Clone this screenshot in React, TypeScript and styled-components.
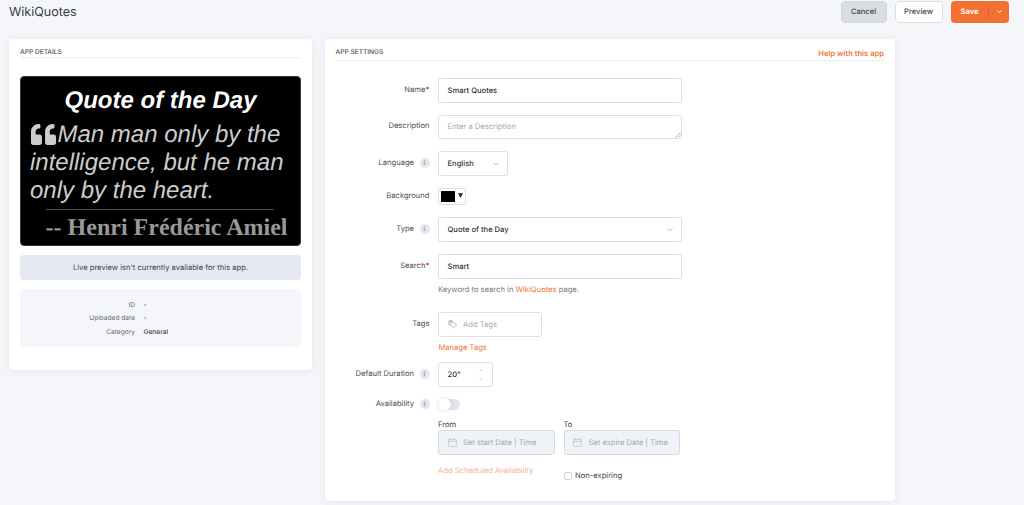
import React from "react";
import styled, { createGlobalStyle } from "styled-components";

const Global = createGlobalStyle`
  *, *::before, *::after { box-sizing: border-box; }
  body {
    margin: 0;
    background: #f5f6fa;
    color: #3e444d;
    font-family: Inter, "Liberation Sans", sans-serif;
    font-size: 7.6px;
    line-height: 10px;
    text-rendering: geometricPrecision;
    overflow: hidden;
  }
`;

const Page = styled.div`
  height: 505px;
  overflow: hidden;
`;

const Header = styled.header`
  display: flex;
  align-items: center;
  height: 23px;
  padding: 0 15px 0 9px;
`;

const Title = styled.h1`
  flex: 1;
  margin: 0;
  padding-top: 2px;
  font-size: 12.5px;
  line-height: 16px;
  font-weight: 400;
  color: #363b44;
`;

const Button = styled.button<{ $kind: "muted" | "plain" }>`
  width: ${(p) => (p.$kind === "muted" ? 46 : 48)}px;
  height: 22px;
  margin-right: ${(p) => (p.$kind === "muted" ? 8 : 8.5)}px;
  padding: 1px 0 0;
  border: 1px solid ${(p) => (p.$kind === "muted" ? "#d5d8de" : "#dcdee3")};
  border-radius: 4px;
  background: ${(p) => (p.$kind === "muted" ? "#d9dce1" : "#fff")};
  color: #3e444d;
  font: 500 7.6px/10px Inter, sans-serif;
  text-rendering: geometricPrecision;
`;

const SplitButton = styled.div`
  display: flex;
  align-items: center;
  width: 58px;
  height: 22px;
  border-radius: 4px;
  background: #f27032;
  color: #fff;
  font-weight: 600;
`;

const SplitMain = styled.span`
  width: 37px;
  padding: 1px 0 0 9.5px;
`;

const SplitMenu = styled.span`
  display: flex;
  align-items: center;
  justify-content: center;
  width: 21px;
  height: 11px;
  border-left: 1px solid #d9622b;
`;

const Columns = styled.main`
  display: flex;
  align-items: flex-start;
  gap: 12.5px;
  padding: 16px 9px 0;
`;

const Card = styled.section<{ $w: number; $h: number }>`
  width: ${(p) => p.$w}px;
  height: ${(p) => p.$h}px;
  padding: 0 11px;
  border-radius: 4px;
  background: #fff;
  box-shadow: 0 1px 8px rgba(60, 70, 110, 0.08);
`;

const CardHead = styled.div<{ $h: number }>`
  display: flex;
  justify-content: space-between;
  height: ${(p) => p.$h}px;
  padding-top: 7.5px;
  border-bottom: 1px solid #eceef1;
`;

const CardTitle = styled.h2`
  margin: 0;
  font-size: 6.6px;
  line-height: 10px;
  font-weight: 500;
  color: #4d535c;
`;

const HelpLink = styled.a`
  padding-top: 2px;
  font-weight: 600;
  color: #f27540;
`;

const Preview = styled.div`
  height: 170px;
  margin-top: 18px;
  padding: 10px 10px 0;
  border: 1px solid #30363a;
  border-radius: 4px;
  background: #000;
  color: #ccc;
  font-family: "Liberation Sans", Arial, sans-serif;
  font-size: 24px;
  line-height: 28px;
`;

const QuoteTitle = styled.div`
  color: #fff;
  font-weight: 700;
  font-style: italic;
  text-align: center;
`;

const QuoteText = styled.div`
  margin-top: 6px;
  margin-left: -1px;
  font-style: italic;
  white-space: nowrap;
`;

const QuoteMark = styled.svg`
  width: 25px;
  height: 21px;
  margin: 0 1.5px 0 1px;
  vertical-align: -2.5px;
`;

const Rule = styled.div`
  width: 228px;
  height: 1px;
  margin: 4px 0 0 15px;
  background: repeating-linear-gradient(90deg, #555 0 3px, #2c2c2c 3px 4px);
`;

const Author = styled.div`
  margin: 4px 2.5px 0 0;
  color: #999;
  font-family: "Liberation Serif", "Times New Roman", serif;
  font-weight: 700;
  text-align: right;
  white-space: nowrap;
`;

const Notice = styled.div`
  height: 25px;
  margin-top: 9px;
  border-radius: 4px;
  background: #e5eaf2;
  line-height: 26px;
  text-align: center;
`;

const Facts = styled.dl`
  display: grid;
  grid-template-columns: 115px 1fr;
  grid-auto-rows: 13.5px;
  column-gap: 8.5px;
  height: 58px;
  margin: 9px 0 0;
  padding-top: 9.5px;
  border-radius: 4px;
  background: #f5f6fa;
  font-size: 6.6px;
  line-height: 13px;
`;

const FactName = styled.dt`
  text-align: right;
  color: #666c76;
`;

const FactValue = styled.dd`
  margin: 0;
  font-weight: 500;
`;

const Form = styled.div`
  display: flex;
  flex-direction: column;
  padding-top: 17px;
`;

const Row = styled.div<{ $h: number }>`
  display: flex;
  align-items: flex-start;
  height: ${(p) => p.$h}px;
`;

const Label = styled.div<{ $top?: number }>`
  display: flex;
  justify-content: flex-end;
  align-items: center;
  width: 94px;
  height: 10px;
  margin-top: ${(p) => p.$top ?? 6.5}px;
  margin-right: 8.5px;
  color: #4a505a;
  white-space: nowrap;
`;

const Required = styled.span`
  color: #d8331c;
  font-weight: 600;
`;

const Info = styled.span`
  display: flex;
  align-items: center;
  justify-content: center;
  width: 10px;
  height: 10px;
  margin-left: 5.5px;
  border-radius: 50%;
  background: #e1e7ef;
  color: #8d98a6;
  font: 700 6.5px/10px Inter, sans-serif;
`;

const Box = styled.div<{ $w: number; $muted?: boolean; $dim?: boolean }>`
  position: relative;
  display: flex;
  align-items: center;
  width: ${(p) => p.$w}px;
  height: 24.5px;
  padding: 0.5px 8px 0 8.5px;
  border: 1px solid ${(p) => (p.$dim ? "#d6dae0" : "#dcdee1")};
  border-radius: 2.5px;
  background: ${(p) => (p.$dim ? "#eff2f6" : "#fff")};
  color: ${(p) => (p.$muted ? "#a3aab6" : "#2e333b")};
  font-weight: ${(p) => (p.$muted ? 400 : 500)};
  white-space: nowrap;
`;

const Grow = styled.span`
  flex: 1;
`;

const Resizer = styled.svg`
  position: absolute;
  right: 0;
  bottom: 0;
`;

const LeadIcon = styled.svg`
  flex: none;
  margin-right: 6.5px;
`;

const Swatch = styled.div`
  display: flex;
  align-items: flex-start;
  gap: 3px;
  width: 27.5px;
  height: 16.5px;
  padding: 2px;
  border: 1px solid #dcdee1;
  border-radius: 2px;
`;

const SwatchColor = styled.span`
  width: 13.5px;
  height: 11px;
  background: #000;
`;

const SwatchArrow = styled.svg`
  margin-top: 1.5px;
`;

const Stack = styled.div`
  display: flex;
  flex-direction: column;
`;

const Hint = styled.div`
  margin-top: 6.5px;
  color: #777c85;
`;

const Link = styled.a`
  color: #f27540;
`;

const ManageLink = styled(Link)`
  margin: 6px 0 0 0.5px;
`;

const Stepper = styled.span`
  display: flex;
  flex-direction: column;
  gap: 7px;
  margin-right: 1.5px;
`;

const Toggle = styled.span`
  display: flex;
  align-items: center;
  width: 21px;
  height: 11px;
  margin: 0 0 0 1px;
  border-radius: 6px;
  background: #e0e5eb;
`;

const Knob = styled.span`
  width: 13px;
  height: 13px;
  margin-left: -1px;
  border-radius: 50%;
  background: #fff;
  box-shadow: 0 0 3px rgba(50, 60, 80, 0.22);
`;

const Dates = styled.div`
  display: grid;
  grid-template-columns: 117px 117px;
  column-gap: 8.5px;
  margin-left: 102.5px;
`;

const DateLabel = styled.div`
  height: 10.5px;
`;

const Faded = styled(Link)`
  padding-top: 11.5px;
  opacity: 0.55;
`;

const CheckLabel = styled.label`
  display: flex;
  align-items: center;
  gap: 3px;
  margin-top: 16px;
`;

const Checkbox = styled.span`
  width: 8.5px;
  height: 8.5px;
  margin-top: 1px;
  border: 1px solid #d0d3d9;
  border-radius: 2px;
`;

type ChevronProps = { w?: number; up?: boolean; color?: string; stroke?: number };

const Chevron = ({ w = 6, up, color = "#b2b8c1", stroke = 0.9 }: ChevronProps) => (
  <svg width={w} height={w / 2 + 0.5} viewBox="0 0 6 3.5" fill="none" stroke={color} strokeWidth={stroke}>
    <path d={up ? "M.4 3 3 .6 5.6 3" : "M.4.5 3 2.9 5.6.5"} />
  </svg>
);

const CalendarIcon = () => (
  <LeadIcon width="9" height="9" viewBox="0 0 9 9" fill="none" stroke="#bcc2cc" strokeWidth="0.75">
    <rect x="0.6" y="1.3" width="7.8" height="7.2" rx="0.7" />
    <path d="M.6 3.4h7.8M2.6 0v2.2M6.4 0v2.2" />
  </LeadIcon>
);

const TagIcon = () => (
  <LeadIcon width="9" height="9" viewBox="0 0 9 9" fill="none" stroke="#a5acb8" strokeWidth="0.8">
    <path d="M2.1 1.5h2.7l3.2 2.7q.6.6.1 1.2L6.3 7.5q-.6.5-1.2 0L2.1 4.6z" />
    <path d="M.8 4.6V1.2q0-.8.9-.8h3M.8 4.4l2 2" />
    <circle cx="3.7" cy="3" r=".4" />
  </LeadIcon>
);

const facts = [
  ["ID", "-"],
  ["Uploaded date", "-"],
  ["Category", "General"],
];

export default function App() {
  return (
    <Page>
      <Global />
      <Header>
        <Title>WikiQuotes</Title>
        <Button $kind="muted">Cancel</Button>
        <Button $kind="plain">Preview</Button>
        <SplitButton>
          <SplitMain>Save</SplitMain>
          <SplitMenu>
            <Chevron w={5} color="#fff" stroke={1.1} />
          </SplitMenu>
        </SplitButton>
      </Header>
      <Columns>
        <Card $w={303} $h={331}>
          <CardHead $h={19}>
            <CardTitle>APP DETAILS</CardTitle>
          </CardHead>
          <Preview>
            <QuoteTitle>Quote of the Day</QuoteTitle>
            <QuoteText>
              <QuoteMark viewBox="0 0 512 448" preserveAspectRatio="none" fill="#ccc">
                <path d="M464 224h-80v-64c0-35 29-64 64-64h8c13 0 24-11 24-24V24c0-13-11-24-24-24h-8c-88 0-160 72-160 160v240c0 27 22 48 48 48h128c27 0 48-21 48-48V272c0-27-21-48-48-48zM176 224H96v-64c0-35 29-64 64-64h8c13 0 24-11 24-24V24c0-13-11-24-24-24h-8C72 0 0 72 0 160v240c0 27 22 48 48 48h128c27 0 48-21 48-48V272c0-27-21-48-48-48z" />
              </QuoteMark>
              Man man only by the
              <br />
              intelligence, but he man
              <br />
              only by the heart.
            </QuoteText>
            <Rule />
            <Author>-- Henri Frédéric Amiel</Author>
          </Preview>
          <Notice>Live preview isn't currently available for this app.</Notice>
          <Facts>
            {facts.map(([name, value]) => (
              <React.Fragment key={name}>
                <FactName>{name}</FactName>
                <FactValue>{value}</FactValue>
              </React.Fragment>
            ))}
          </Facts>
        </Card>
        <Card $w={570.5} $h={462}>
          <CardHead $h={22}>
            <CardTitle>APP SETTINGS</CardTitle>
            <HelpLink>Help with this app</HelpLink>
          </CardHead>
          <Form>
            <Row $h={36.5}>
              <Label>
                Name<Required>*</Required>
              </Label>
              <Box $w={243.5}>Smart Quotes</Box>
            </Row>
            <Row $h={36.5}>
              <Label>Description</Label>
              <Box $w={243.5} $muted>
                Enter a Description
                <Resizer width="6" height="6" viewBox="0 0 6 6" stroke="#8d9197" strokeWidth="0.7">
                  <path d="M.5 5.5l5-5M3.3 5.5l2.2-2.2" />
                </Resizer>
              </Box>
            </Row>
            <Row $h={37}>
              <Label>
                Language<Info>i</Info>
              </Label>
              <Box $w={70}>
                <Grow>English</Grow>
                <Chevron />
              </Box>
            </Row>
            <Row $h={29}>
              <Label $top={3}>Background</Label>
              <Swatch>
                <SwatchColor />
                <SwatchArrow width="5" height="5" viewBox="0 0 5 5">
                  <path d="M0 .3h5L2.5 5z" fill="#22262c" />
                </SwatchArrow>
              </Swatch>
            </Row>
            <Row $h={37}>
              <Label>
                Type<Info>i</Info>
              </Label>
              <Box $w={243.5}>
                <Grow>Quote of the Day</Grow>
                <Chevron />
              </Box>
            </Row>
            <Row $h={58}>
              <Label>
                Search<Required>*</Required>
              </Label>
              <Stack>
                <Box $w={243.5}>Smart</Box>
                <Hint>
                  Keyword to search in <Link>WikiQuotes</Link> page.
                </Hint>
              </Stack>
            </Row>
            <Row $h={50}>
              <Label>Tags</Label>
              <Stack>
                <Box $w={104} $muted>
                  <TagIcon />
                  Add Tags
                </Box>
                <ManageLink>Manage Tags</ManageLink>
              </Stack>
            </Row>
            <Row $h={37}>
              <Label>
                Default Duration<Info>i</Info>
              </Label>
              <Box $w={55}>
                <Grow>20"</Grow>
                <Stepper>
                  <Chevron w={4} up />
                  <Chevron w={4} />
                </Stepper>
              </Box>
            </Row>
            <Row $h={20.5}>
              <Label $top={0}>
                Availability<Info>i</Info>
              </Label>
              <Toggle>
                <Knob />
              </Toggle>
            </Row>
            <Dates>
              <DateLabel>From</DateLabel>
              <DateLabel>To</DateLabel>
              <Box $w={117} $muted $dim>
                <CalendarIcon />
                Set start Date | Time
              </Box>
              <Box $w={116.5} $muted $dim>
                <CalendarIcon />
                Set expire Date | Time
              </Box>
              <Faded>Add Scheduled Availability</Faded>
              <CheckLabel>
                <Checkbox />
                Non-expiring
              </CheckLabel>
            </Dates>
          </Form>
        </Card>
      </Columns>
    </Page>
  );
}
